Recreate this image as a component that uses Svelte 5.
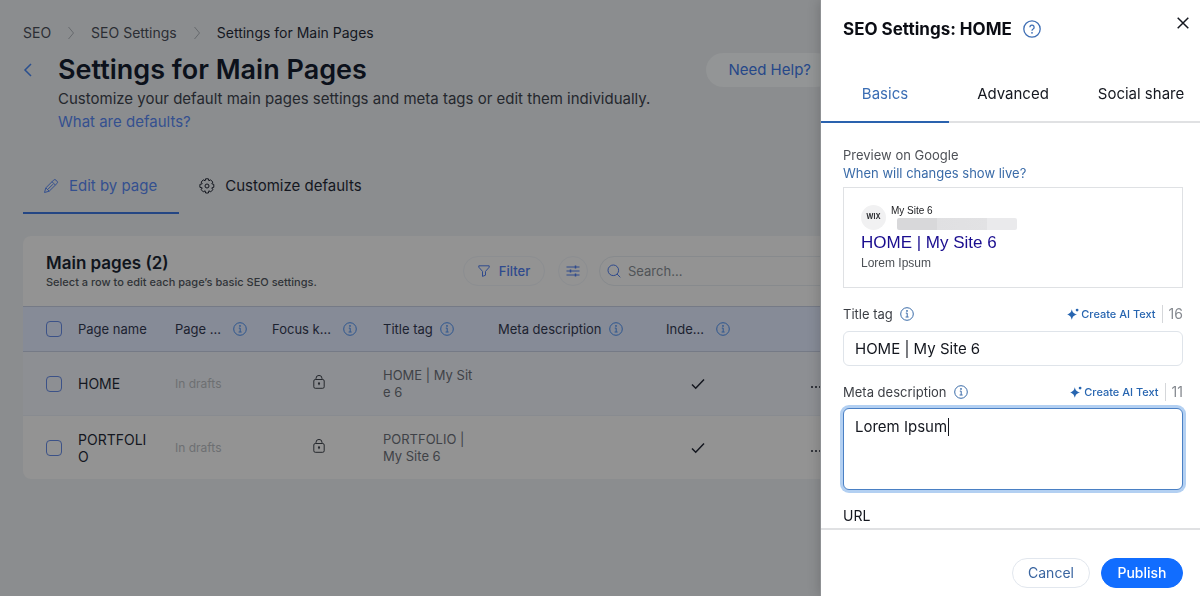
<script lang="ts">
  const crumbs = ['SEO', 'SEO Settings', 'Settings for Main Pages']

  const columns = [
    { label: 'Page name', info: false, wide: false },
    { label: 'Page ...', info: true, wide: true },
    { label: 'Focus k...', info: true, wide: true },
    { label: 'Title tag', info: true, wide: false },
    { label: 'Meta description', info: true, wide: false },
    { label: 'Inde...', info: true, wide: true },
  ]

  let rows = $state([
    { name: 'HOME', status: 'In drafts', title: 'HOME | My Site 6', active: true, checked: false },
    { name: 'PORTFOLIO', status: 'In drafts', title: 'PORTFOLIO | My Site 6', active: false, checked: false },
  ])

  const drawerTabs = ['Basics', 'Advanced', 'Social share']
  let activeTab = $state('Basics')

  let search = $state('')
  let titleTag = $state('HOME | My Site 6')
  let metaDescription = $state('Lorem Ipsum')
  let metaField: HTMLTextAreaElement
  let caretLeft = $state(0)

  $effect(() => {
    metaField.focus()
    metaField.setSelectionRange(metaField.value.length, metaField.value.length)
  })

  // the caret sits right after the typed text
  $effect(() => {
    const style = getComputedStyle(metaField)
    const ctx = document.createElement('canvas').getContext('2d')!
    ctx.font = `${style.fontSize} ${style.fontFamily}`
    caretLeft = Math.round(ctx.measureText(metaDescription).width + parseFloat(style.paddingLeft) + 2)
  })
</script>

{#snippet infoIcon()}
  <svg class="info" viewBox="0 0 14 14" width="14" height="14" aria-hidden="true">
    <circle cx="7" cy="7" r="6.3" />
    <path d="M5.8 6.1h1.4v3.8M5.6 10h3" />
    <circle class="dot" cx="7" cy="3.9" r="0.9" />
  </svg>
{/snippet}

{#snippet aiButton()}
  <button class="ai" type="button">
    <svg viewBox="0 0 12 12" width="12" height="12" aria-hidden="true">
      <path d="M4.8 1.2C5.7 4.6 6.7 5.6 10.2 6.500 6.700 7.400 5.700 8.400 4.800 11.800 3.900 8.400 2.900 7.400 0 6.500 2.900 5.600 3.900 4.600 4.800 1.200Z" />
      <circle cx="10.100" cy="2.100" r="1.400" />
    </svg>
    Create AI Text
  </button>
{/snippet}

<main class="page">
  <nav class="crumbs" aria-label="Breadcrumb">
    {#each crumbs as crumb, i}
      {#if i > 0}
        <svg viewBox="0 0 8 14" width="8" height="14" aria-hidden="true"><path d="M1.5 1l5 6-5 6" /></svg>
      {/if}
      {#if i < crumbs.length - 1}
        <a href="#top">{crumb}</a>
      {:else}
        <span class="current">{crumb}</span>
      {/if}
    {/each}
  </nav>

  <header class="page-header">
    <button class="back" type="button" aria-label="Back">
      <svg viewBox="0 0 10 14" width="10" height="14" aria-hidden="true"><path d="M8 1L2 7l6 6" /></svg>
    </button>
    <div class="heading">
      <h1>Settings for Main Pages</h1>
      <p>Customize your default main pages settings and meta tags or edit them individually.</p>
      <a href="#defaults">What are defaults?</a>
    </div>
    <button class="help" type="button">Need Help?</button>
  </header>

  <div class="page-tabs">
    <button class="page-tab selected" type="button">
      <svg viewBox="0 0 16 16" width="16" height="16" aria-hidden="true">
        <path d="M1.5 14.5l1.3-4.6 7.7-7.7a1.8 1.8 0 0 1 2.6 0l.8.8a1.8 1.8 0 0 1 0 2.6l-7.7 7.6zM9 3.7l3.4 3.4M3 10l3.2 3.2M4.8 11.4l5.2-5.2" />
      </svg>
      Edit by page
    </button>
    <button class="page-tab" type="button">
      <svg viewBox="0 0 16 16" width="16" height="16" aria-hidden="true">
        <path d="M6.6.8h2.8l.5 2 1.7-1 2.2 2.3-1 1.7 2 .6v2.9l-2 .6 1 1.8-2.1 2.2-1.8-1.1-.5 2.2H6.600l-.5-2.200-1.800 1.100-2.100-2.200 1-1.800-2.300-.6V6.400l2.300-.6-1-1.700 2.100-2.300 1.800 1z" />
        <circle cx="8" cy="8" r="2" />
      </svg>
      Customize defaults
    </button>
  </div>

  <section class="card">
    <div class="toolbar">
      <div class="toolbar-title">
        <h2>Main pages (2)</h2>
        <p>Select a row to edit each page’s basic SEO settings.</p>
      </div>
      <button class="filter" type="button">
        <svg viewBox="0 0 12 12" width="12" height="12" aria-hidden="true"><path d="M.8.8h10.4v1.400L7.500 6.400v3.800L4.500 11.400V6.400L.8 2.200z" /></svg>
        Filter
      </button>
      <button class="columns" type="button" aria-label="Manage columns">
        <svg viewBox="0 0 14 12" width="14" height="12" aria-hidden="true">
          <path d="M.5 2h13M.5 6h13M.5 10h13" />
          <path class="knobs" d="M9.5.5v3M4.5 4.5v3M9.5 8.5v3" />
        </svg>
      </button>
      <label class="search">
        <svg viewBox="0 0 14 14" width="14" height="14" aria-hidden="true">
          <circle cx="6.3" cy="6.3" r="5.3" />
          <path d="M10 10l3.3 3.3" />
        </svg>
        <input type="text" placeholder="Search..." aria-label="Search" bind:value={search} />
      </label>
    </div>

    <table>
      <colgroup>
        <col class="col-check" />
        <col class="col-name" />
        <col class="col-page" />
        <col class="col-focus" />
        <col class="col-title" />
        <col class="col-meta" />
        <col class="col-index" />
        <col />
      </colgroup>
      <thead>
        <tr>
          <th><input type="checkbox" aria-label="Select all pages" /></th>
          {#each columns as column}
            <th>
              <span class="th-label" class:wide={column.wide}>
                {column.label}
                {#if column.info}{@render infoIcon()}{/if}
              </span>
            </th>
          {/each}
          <th></th>
        </tr>
      </thead>
      <tbody>
        {#each rows as row}
          <tr class:active={row.active}>
            <td><input type="checkbox" aria-label="Select {row.name}" bind:checked={row.checked} /></td>
            <td class="name">{row.name}</td>
            <td class="status">{row.status}</td>
            <td class="lock">
              <svg viewBox="0 0 12 14" width="12" height="14" aria-label="Locked">
                <rect x="0.8" y="4.5" width="10.4" height="8.8" rx="1.5" />
                <path d="M3 4.5V3.4a3 3 0 0 1 6 0v1.1M6 8.2v2" />
                <circle class="dot" cx="6" cy="8.3" r="1.1" />
              </svg>
            </td>
            <td class="title">{row.title}</td>
            <td></td>
            <td class="indexed">
              <svg viewBox="0 0 14 12" width="14" height="12" aria-label="Indexed"><path d="M1 6.5L4.7 10.2 13 1.5" /></svg>
            </td>
            <td class="more">
              <button type="button" aria-label="More actions">
                <svg viewBox="0 0 14 4" width="14" height="4" aria-hidden="true">
                  <circle cx="2" cy="2" r="1" /><circle cx="6" cy="2" r="1" /><circle cx="10" cy="2" r="1" />
                </svg>
              </button>
            </td>
          </tr>
        {/each}
      </tbody>
    </table>
  </section>
</main>

<aside class="drawer">
  <header class="drawer-header">
    <h2>SEO Settings: HOME</h2>
    <svg class="question" viewBox="0 0 18 18" width="18" height="18" aria-hidden="true">
      <circle cx="9" cy="9" r="8.2" />
      <path d="M6.9 7.2a2.1 2.1 0 1 1 3.2 1.8c-.7.4-1.1.8-1.1 1.7" />
      <circle class="dot" cx="9" cy="12.8" r="0.9" />
    </svg>
    <button class="close" type="button" aria-label="Close">
      <svg viewBox="0 0 12 12" width="12" height="12" aria-hidden="true"><path d="M.7.7l10.6 10.6M11.3.7L.7 11.3" /></svg>
    </button>
  </header>

  <div class="drawer-tabs">
    {#each drawerTabs as tab}
      <button type="button" class:selected={tab === activeTab} onclick={() => (activeTab = tab)}>{tab}</button>
    {/each}
  </div>

  <div class="drawer-body">
    <p class="preview-label">Preview on Google</p>
    <a class="preview-link" href="#live">When will changes show live?</a>

    <div class="preview">
      <div class="preview-site">
        <span class="favicon">WIX</span>
        <div>
          <p class="site-name">My Site 6</p>
          <div class="site-url"></div>
        </div>
      </div>
      <p class="preview-title">{titleTag}</p>
      <p class="preview-text">{metaDescription}</p>
    </div>

    <div class="field-head">
      <label for="title-tag">Title tag</label>
      {@render infoIcon()}
      {@render aiButton()}
      <span class="count">{titleTag.length}</span>
    </div>
    <input id="title-tag" class="text-field" type="text" bind:value={titleTag} />

    <div class="field-head">
      <label for="meta-description">Meta description</label>
      {@render infoIcon()}
      {@render aiButton()}
      <span class="count">{metaDescription.length}</span>
    </div>
    <div class="meta-wrap">
      <textarea id="meta-description" class="text-field" bind:this={metaField} bind:value={metaDescription}></textarea>
      <span class="caret" style:left="{caretLeft}px"></span>
    </div>

    <p class="url-label">URL</p>
  </div>

  <footer class="drawer-footer">
    <button class="cancel" type="button">Cancel</button>
    <button class="publish" type="button">Publish</button>
  </footer>
</aside>

<style>
  :global(body) {
    margin: 0;
    background: #8b8d8f;
    font-family: Inter, 'Open Sans', sans-serif;
    font-size: 14px;
    line-height: 18px;
    color: #14171f;
  }

  h1,
  h2,
  p {
    margin: 0;
  }

  a {
    text-decoration: none;
  }

  button,
  input,
  textarea {
    font: inherit;
    color: inherit;
    box-sizing: border-box;
  }

  button {
    margin: 0;
    padding: 0;
    border: 0;
    background: none;
    cursor: pointer;
  }

  svg {
    display: block;
    flex: none;
    fill: none;
    stroke: currentColor;
  }

  .dot {
    fill: currentColor;
    stroke: none;
  }

  /* Page behind the drawer */
  .page {
    box-sizing: border-box;
    padding: 24px 340px 24px 23px;
  }

  .crumbs {
    display: flex;
    align-items: center;
    gap: 16px;
    color: #2b2e34;
  }

  .crumbs a {
    color: inherit;
  }

  .crumbs svg {
    color: #66696d;
  }

  .crumbs .current {
    color: #14171f;
  }

  .page-header {
    display: flex;
    align-items: flex-start;
    padding: 10px 27px 0 0;
  }

  .back {
    flex: none;
    width: 35px;
    height: 36px;
    color: #2a4f8f;
  }

  .back svg {
    stroke-width: 1.5;
  }

  .heading {
    flex: 1;
    font-size: 15px;
    line-height: 23px;
    color: #24272d;
  }

  h1 {
    font-size: 27px;
    font-weight: 600;
    line-height: 35px;
    color: #0c111b;
  }

  .heading a {
    color: #34508f;
  }

  .help {
    height: 34px;
    padding: 0 22px;
    margin-top: 1px;
    border-radius: 17px;
    background: #939596;
    font-size: 15px;
    color: #264889;
  }

  .page-tabs {
    display: flex;
    margin-top: 24px;
  }

  .page-tab {
    display: flex;
    align-items: center;
    gap: 10px;
    height: 57px;
    padding: 2px 22px 0 20px;
    border-bottom: 2px solid transparent;
    font-size: 15px;
  }

  .page-tab.selected {
    border-color: #244684;
    color: #34508f;
  }

  .card {
    margin-top: 22px;
    border-radius: 8px;
    background: #939393;
    overflow: hidden;
  }

  .toolbar {
    display: flex;
    align-items: center;
    height: 70px;
    padding: 0 24px 0 23px;
  }

  .toolbar-title {
    flex: 1;
    padding-top: 2px;
    font-size: 11px;
    font-weight: 500;
    color: #303338;
  }

  .toolbar h2 {
    font-size: 17px;
    font-weight: 600;
    line-height: 20px;
    color: #10151d;
  }

  .filter {
    display: flex;
    align-items: center;
    justify-content: center;
    gap: 9px;
    width: 82px;
    height: 30px;
    border: 1px solid #8c8e91;
    border-radius: 15px;
    font-size: 13px;
    font-weight: 500;
    color: #2f4a8d;
  }

  .columns {
    display: grid;
    place-items: center;
    width: 30px;
    height: 30px;
    margin: 0 11px 0 13px;
    border: 1px solid #8c8e91;
    border-radius: 50%;
    color: #2f4a8d;
  }

  .knobs {
    stroke-width: 1.5;
  }

  .search {
    display: flex;
    align-items: center;
    gap: 7px;
    box-sizing: border-box;
    width: 237px;
    height: 30px;
    padding: 0 7px;
    border: 1px solid #878a8d;
    border-radius: 15px;
    font-size: 13px;
    color: #2f4a8d;
  }

  .search input {
    flex: 1;
    min-width: 0;
    padding: 0;
    border: 0;
    outline: 0;
    background: none;
  }

  .search input::placeholder {
    color: #505357;
  }

  table {
    width: 100%;
    table-layout: fixed;
    border-collapse: separate;
    border-spacing: 0;
  }

  .col-check {
    width: 55px;
  }

  .col-name {
    width: 97px;
  }

  .col-page {
    width: 97px;
  }

  .col-focus {
    width: 111px;
  }

  .col-title {
    width: 115px;
  }

  .col-meta {
    width: 168px;
  }

  .col-index {
    width: 140px;
  }

  th {
    height: 44px;
    padding: 0;
    border-top: 1px solid #757a86;
    border-bottom: 1px solid #757a86;
    background: #868b97;
    font-size: 13px;
    font-weight: 400;
    text-align: left;
    color: #1c2230;
  }

  th .info {
    color: #2d568f;
  }

  .th-label {
    display: flex;
    align-items: center;
    gap: 7px;
    white-space: nowrap;
  }

  .th-label.wide {
    gap: 12px;
  }

  td {
    box-sizing: border-box;
    height: 63px;
    padding: 0 24px 0 0;
    line-height: 17px;
    overflow-wrap: anywhere;
  }

  td:first-child,
  th:first-child {
    padding: 0 0 0 23px;
  }

  .active td {
    height: 64px;
    border-bottom: 1px solid #888b90;
    background: #8d8f93;
  }

  input[type='checkbox'] {
    display: block;
    width: 16px;
    height: 16px;
    margin: 0;
    appearance: none;
    border: 1px solid #3c5288;
    border-radius: 4px;
  }

  input[type='checkbox']:checked {
    background: #3c5288;
  }

  td.status {
    font-size: 12px;
    color: #6d6f72;
  }

  td.lock {
    padding: 0 0 3px 41px;
    color: #26292e;
  }

  td.title {
    padding-right: 21px;
    font-size: 13px;
    word-break: break-all;
    color: #3f4247;
  }

  td.indexed {
    padding: 0 0 0 25px;
  }

  .indexed svg {
    stroke-width: 1.5;
  }

  td.more {
    padding: 0 0 0 4px;
  }

  .more circle {
    fill: currentColor;
    stroke: none;
  }

  /* Drawer */
  .drawer {
    position: fixed;
    inset: 0 0 0 auto;
    display: flex;
    flex-direction: column;
    box-sizing: border-box;
    width: 380px;
    border-left: 1px solid #8f9194;
    background: #fff;
    box-shadow: 0 0 12px rgba(0, 0, 0, 0.2);
  }

  .drawer-header {
    display: flex;
    align-items: center;
    height: 58px;
    padding: 0 4px 0 22px;
  }

  .drawer-header h2 {
    font-size: 17px;
    font-weight: 700;
    line-height: 24px;
    color: #0b0d14;
  }

  .question {
    margin-left: 11px;
    stroke-width: 1.3;
    color: #3f6fb5;
  }

  .close {
    display: flex;
    align-self: flex-start;
    margin: 10px 0 0 auto;
    padding: 7px;
  }

  .close svg {
    stroke-width: 1.5;
  }

  .drawer-tabs {
    display: flex;
    flex: none;
    overflow: hidden;
    box-shadow: inset 0 -2px #e0e1e3;
  }

  .drawer-tabs button {
    flex: 0 0 128px;
    height: 65px;
    padding-top: 8px;
    border-bottom: 2px solid transparent;
    font-size: 15px;
  }

  .drawer-tabs .selected {
    border-color: #2a62ae;
    color: #3a6db4;
  }

  .drawer-body {
    flex: 1;
    min-height: 0;
    padding: 23px 17px 0 22px;
    overflow: hidden;
    font-size: 13px;
  }

  .preview-label {
    color: #4e5157;
  }

  .preview-link {
    display: block;
    color: #3a6ba8;
  }

  .preview {
    height: 101px;
    margin: 5px 0 16px;
    padding: 16px 17px;
    box-sizing: border-box;
    border: 1px solid #dfe1e4;
    font-family: 'Liberation Sans', Arial, sans-serif;
  }

  .preview-site {
    display: flex;
    align-items: center;
    gap: 5px;
  }

  .favicon {
    display: grid;
    place-items: center;
    width: 25px;
    height: 25px;
    border-radius: 50%;
    background: #f1f1f2;
    font-family: Inter, sans-serif;
    font-size: 7px;
    font-weight: 700;
    color: #303236;
  }

  .site-name {
    font-size: 10px;
    line-height: 14px;
    color: #202124;
  }

  .site-url {
    width: 120px;
    height: 12px;
    margin-left: 6px;
    border-radius: 2px;
    background: linear-gradient(90deg, #d8d8da 33%, #e0e0e2 33%, #e2e2e4 75%, #eaeaec 75%);
  }

  .preview-title {
    font-size: 17px;
    line-height: 25px;
    color: #1a0d8f;
  }

  .preview-text {
    font-size: 12px;
    line-height: 16px;
    color: #4d5156;
  }

  .field-head {
    display: flex;
    align-items: center;
    height: 20px;
    color: #3b3e44;
  }

  .field-head .info {
    margin-left: 7px;
    color: #3a6ba8;
  }

  .ai {
    display: flex;
    align-items: center;
    gap: 2px;
    margin-left: auto;
    font-size: 11px;
    font-weight: 500;
    color: #2765b0;
  }

  .ai svg {
    fill: currentColor;
    stroke: none;
  }

  .count {
    margin-left: 6px;
    padding-left: 6px;
    border-left: 1px solid #d5d7da;
    font-size: 14px;
    color: #868a90;
  }

  .text-field {
    display: block;
    width: 100%;
    height: 35px;
    margin: 7px 0 16px;
    padding: 0 11px;
    border: 1px solid #dfe4ea;
    border-radius: 6px;
    outline: 0;
    background: #fff;
    font-size: 15px;
  }

  .meta-wrap {
    position: relative;
    margin: 6px 0 17px;
  }

  .meta-wrap .text-field {
    height: 82px;
    margin: 0;
    padding: 9px 11px;
    resize: none;
    caret-color: transparent;
  }

  .meta-wrap .text-field:focus {
    border-color: #4a80c4;
    box-shadow: 0 0 0 3px #b3d0f2;
  }

  .caret {
    position: absolute;
    top: 10px;
    width: 1px;
    height: 18px;
    background: #14171f;
  }

  .url-label {
    font-size: 14px;
  }

  .drawer-footer {
    display: flex;
    flex: none;
    justify-content: flex-end;
    gap: 11px;
    padding: 28px 17px 8px;
    border-top: 2px solid #e0e1e3;
  }

  .drawer-footer button {
    height: 30px;
    border: 1px solid #e2e7ee;
    border-radius: 15px;
    color: #3a65a0;
  }

  .drawer-footer .cancel {
    width: 78px;
  }

  .drawer-footer .publish {
    width: 82px;
    border-color: #116dff;
    background: #116dff;
    font-weight: 500;
    color: #fff;
  }
</style>
